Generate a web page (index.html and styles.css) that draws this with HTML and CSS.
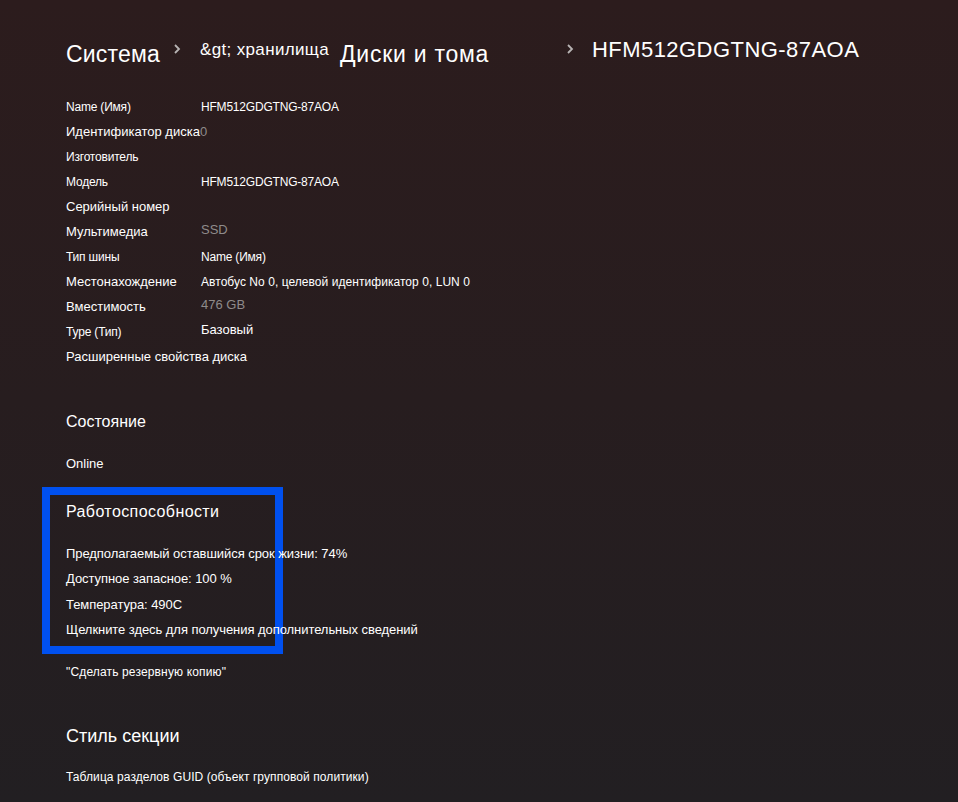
FILE: index.html
```html
<!DOCTYPE html>
<html lang="ru">
<head>
<meta charset="utf-8">
<title>HFM512GDGTNG-87AOA</title>
<link rel="stylesheet" href="styles.css">
</head>
<body>
<div class="highlight"></div>
<div class="page">
  <nav class="crumbs">
    <span class="crumb c-system">Система</span>
    <span class="chev chev-1"><svg width="8" height="10" viewBox="0 0 8 10"><polyline points="2,1 6,5 2,9" fill="none" stroke="#b8b4b4" stroke-width="1.8"/></svg></span>
    <span class="crumb c-store">&amp;gt; хранилища</span>
    <span class="crumb c-disks">Диски и тома</span>
    <span class="chev chev-2"><svg width="8" height="10" viewBox="0 0 8 10"><polyline points="2,1 6,5 2,9" fill="none" stroke="#b8b4b4" stroke-width="1.8"/></svg></span>
    <span class="crumb c-disk">HFM512GDGTNG-87AOA</span>
  </nav>

  <div class="props">
    <div class="row"><span class="lbl s12">Name (Имя)</span><span class="val s12">HFM512GDGTNG-87AOA</span></div>
    <div class="row"><span class="lbl s13">Идентификатор диска</span><span class="val s13 grey zero">0</span></div>
    <div class="row"><span class="lbl s12">Изготовитель</span><span class="val"></span></div>
    <div class="row"><span class="lbl s12">Модель</span><span class="val s12">HFM512GDGTNG-87AOA</span></div>
    <div class="row"><span class="lbl s13">Серийный номер</span><span class="val"></span></div>
    <div class="row"><span class="lbl s13">Мультимедиа</span><span class="val s13 grey up">SSD</span></div>
    <div class="row"><span class="lbl s12">Тип шины</span><span class="val s12">Name (Имя)</span></div>
    <div class="row"><span class="lbl s13">Местонахождение</span><span class="val s12 loose">Автобус No 0, целевой идентификатор 0, LUN 0</span></div>
    <div class="row"><span class="lbl s13">Вместимость</span><span class="val s13 grey up">476 GB</span></div>
    <div class="row"><span class="lbl s12">Type (Тип)</span><span class="val s13 up">Базовый</span></div>
    <div class="row"><span class="lbl s13 wide">Расширенные свойства диска</span></div>
  </div>

  <h2 class="h-state">Состояние</h2>
  <p class="line-online">Online</p>

  <h2 class="h-health">Работоспособности</h2>
  <div class="health">
    <p>Предполагаемый оставшийся срок жизни: 74%</p>
    <p>Доступное запасное: 100 %</p>
    <p>Температура: 490C</p>
    <p>Щелкните здесь для получения дополнительных сведений</p>
  </div>

  <p class="backup">"Сделать резервную копию"</p>

  <h2 class="h-style">Стиль секции</h2>
  <p class="gpt">Таблица разделов GUID (объект групповой политики)</p>
</div>
</body>
</html>
```

FILE: styles.css
```css
html, body {
  margin: 0;
  padding: 0;
}
body {
  width: 958px;
  height: 802px;
  overflow: hidden;
  position: relative;
  background: linear-gradient(to bottom, #2c1c1d 0%, #271d1f 50%, #221f22 100%);
  color: #ffffff;
  font-family: "Liberation Sans", Arial, sans-serif;
}
.page {
  position: relative;
  z-index: 1;
  padding-left: 66px;
}
p, h2 {
  margin: 0;
  font-weight: normal;
}

/* breadcrumb */
.crumbs {
  display: flex;
  align-items: flex-start;
  padding-top: 36px;
  height: 28px;
}
.crumb {
  font-size: 23px;
  line-height: 28px;
  white-space: nowrap;
}
.c-system { width: 107px; margin-top: 4px; letter-spacing: 0.2px; }
.c-store { width: 140px; font-size: 17px; letter-spacing: 0.35px; }
.c-disks { width: 226px; margin-top: 4px; font-size: 23px; letter-spacing: 0.75px; }
.c-disk { font-size: 22px; letter-spacing: 0.45px; }
.chev { display: flex; margin-top: 8px; }
.chev-1 { width: 27px; }
.chev-2 { width: 26px; }

/* properties */
.props {
  margin-top: 30px;
}
.row {
  display: grid;
  grid-template-columns: 135px 1fr;
  height: 25px;
  align-items: center;
  white-space: nowrap;
}
.s12 { font-size: 12px; letter-spacing: -0.2px; }
.s13 { font-size: 13px; letter-spacing: 0; }
.loose { letter-spacing: 0.05px; }
.wide { grid-column: 1 / 3; }
.grey { color: #8f8b8b; }
.up { position: relative; top: -2px; }
.zero { margin-left: -1px; }

/* sections */
.h-state {
  margin-top: 41px;
  font-size: 16px;
  line-height: 24px;
}
.line-online {
  margin-top: 20px;
  font-size: 13px;
  line-height: 20px;
}
.h-health {
  margin-top: 26px;
  font-size: 16px;
  line-height: 24px;
  letter-spacing: 0.4px;
}
.health {
  margin-top: 17px;
}
.health p {
  font-size: 13px;
  line-height: 25.3px;
  letter-spacing: -0.06px;
  white-space: nowrap;
}
.backup {
  margin-top: 20px;
  font-size: 12px;
  line-height: 20px;
  letter-spacing: 0.15px;
}
.h-style {
  margin-top: 41px;
  font-size: 18px;
  line-height: 26px;
}
.gpt {
  margin-top: 18px;
  font-size: 12px;
  line-height: 20px;
  letter-spacing: 0.08px;
}

/* annotation overlay */
.highlight {
  position: absolute;
  z-index: 0;
  left: 42px;
  top: 487px;
  width: 225px;
  height: 151px;
  border: 8px solid #0050ef;
  pointer-events: none;
}
```
